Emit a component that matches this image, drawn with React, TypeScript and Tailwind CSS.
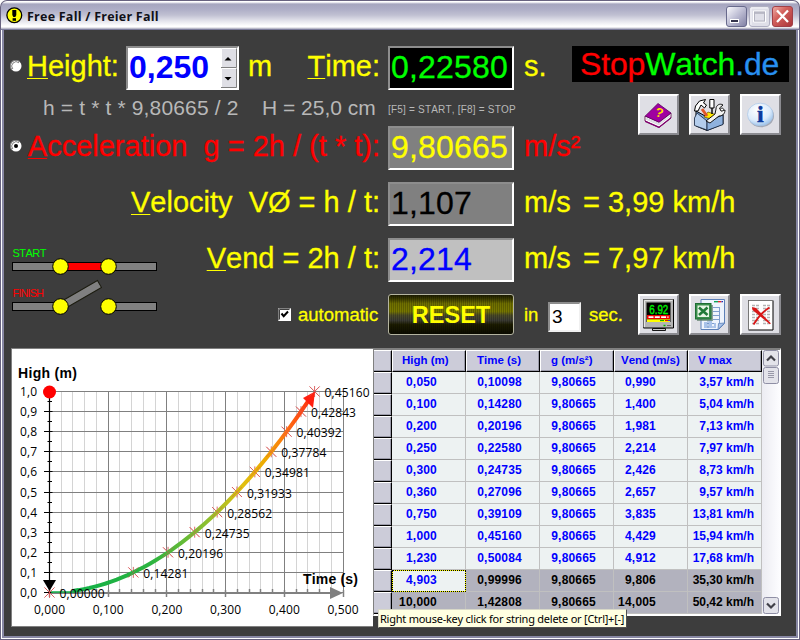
import React from 'react';
import { clsx } from 'clsx';

interface Measurement {
  high: string;
  time: string;
  g: string;
  vend: string;
  vmax: string;
  state?: 'selected' | 'inactive';
}

const measurements: Measurement[] = [
  { high: '0,050', time: '0,10098', g: '9,80665', vend: '0,990', vmax: '3,57 km/h' },
  { high: '0,100', time: '0,14280', g: '9,80665', vend: '1,400', vmax: '5,04 km/h' },
  { high: '0,200', time: '0,20196', g: '9,80665', vend: '1,981', vmax: '7,13 km/h' },
  { high: '0,250', time: '0,22580', g: '9,80665', vend: '2,214', vmax: '7,97 km/h' },
  { high: '0,300', time: '0,24735', g: '9,80665', vend: '2,426', vmax: '8,73 km/h' },
  { high: '0,360', time: '0,27096', g: '9,80665', vend: '2,657', vmax: '9,57 km/h' },
  { high: '0,750', time: '0,39109', g: '9,80665', vend: '3,835', vmax: '13,81 km/h' },
  { high: '1,000', time: '0,45160', g: '9,80665', vend: '4,429', vmax: '15,94 km/h' },
  { high: '1,230', time: '0,50084', g: '9,80665', vend: '4,912', vmax: '17,68 km/h' },
  { high: '4,903', time: '0,99996', g: '9,80665', vend: '9,806', vmax: '35,30 km/h', state: 'selected' },
  { high: '10,000', time: '1,42808', g: '9,80665', vend: '14,005', vmax: '50,42 km/h', state: 'inactive' },
];

const headers = [
  { label: 'High (m)', pad: 'pl-[9px]' },
  { label: 'Time (s)', pad: 'pl-[10px]' },
  { label: 'g (m/s²)', pad: 'pl-[10px]' },
  { label: 'Vend (m/s)', pad: 'pl-[6px]' },
  { label: 'V max', pad: 'pl-[9px]' },
];

// fall times for heights 0,0 m to 1,0 m in steps of 0,1 m
const fallTimes = [0, 0.14281, 0.20196, 0.24735, 0.28562, 0.31933, 0.34981, 0.37784, 0.40392, 0.42843, 0.4516];

const comma = (value: number, digits: number) => value.toFixed(digits).replace('.', ',');

function TitleBar() {
  return (
    <div className="flex h-[30px] items-start rounded-t-[7px] border-x border-t border-b border-x-[#67627f] border-t-[#67627f] border-b-[#7c7c9c] bg-[linear-gradient(#ffffff_0px,#ffffff_1px,#a6a6bf_3px,#adadc6_8px,#c0c0d2_14px,#e4e4ec_20px,#ffffff_25px,#ffffff_26px,#a4a4b8_28px)] pl-[5px] pr-[6px]">
      <svg width="17" height="17" viewBox="0 0 17 17" className="mt-[6px]">
        <circle cx="8.3" cy="8.3" r="7.4" fill="#ffff00" stroke="#000" strokeWidth="1.3" />
        <path d="M6.3 3h4v5l-1 2h-2l-1-2z" fill="#000" />
        <rect x="6.6" y="11.2" width="3.4" height="2.6" fill="#000" />
      </svg>
      <span className="mt-[7px] ml-[4px] flex-1 font-['Open_Sans','Noto_Sans',sans-serif] text-[12.5px] leading-[18px] font-bold tracking-[0.24px] text-[#101018]">
        Free Fall / Freier Fall
      </span>
      <div className="mt-[5px] flex gap-[2px]">
        <svg width="21" height="21" viewBox="0 0 21 21">
          <defs>
            <linearGradient id="btn" x1="0" y1="0" x2="1" y2="1">
              <stop offset="0" stopColor="#fdfdff" />
              <stop offset="0.45" stopColor="#c3c3d8" />
              <stop offset="1" stopColor="#7f7fa3" />
            </linearGradient>
          </defs>
          <rect x="0.5" y="0.5" width="20" height="20" rx="2.5" fill="url(#btn)" stroke="#686a8c" />
          <rect x="4.5" y="13.5" width="8" height="3" fill="#34344c" stroke="#fff" />
        </svg>
        <svg width="21" height="21" viewBox="0 0 21 21">
          <rect x="0.5" y="0.5" width="20" height="20" rx="2.5" fill="#dfdfe8" stroke="#b0b0c2" />
          <path d="M2 19V2h17" fill="none" stroke="#f6f6fa" />
          <path d="M4.5 5h12v11h-12z" fill="none" stroke="#fff" />
          <rect x="5.5" y="6" width="10" height="9" fill="none" stroke="#b3b3c0" />
          <path d="M5 7h11" stroke="#b3b3c0" strokeWidth="1.6" />
        </svg>
        <svg width="21" height="21" viewBox="0 0 21 21">
          <defs>
            <linearGradient id="close" x1="0" y1="0" x2="1" y2="1">
              <stop offset="0" stopColor="#f0b0a8" />
              <stop offset="0.4" stopColor="#d2605c" />
              <stop offset="1" stopColor="#a93438" />
            </linearGradient>
          </defs>
          <rect x="0.5" y="0.5" width="20" height="20" rx="2.5" fill="url(#close)" stroke="#a14048" />
          <path d="M5 4.5l11 11.5M16 4.5L5 16" stroke="#fff" strokeWidth="2.3" />
        </svg>
      </div>
    </div>
  );
}

function Radio({ checked, className }: { checked?: boolean; className?: string }) {
  return (
    <svg width="12" height="12" viewBox="0 0 12 12" className={clsx('shrink-0', className)}>
      <circle cx="6" cy="6" r="5.5" fill="#fff" />
      <path d="M1.9 9.8A5.4 5.4 0 0 1 9.8 1.9" fill="none" stroke="#808080" strokeWidth="1.1" />
      <path d="M2.8 9A4.4 4.4 0 0 1 9 2.8" fill="none" stroke="#4a4a4a" strokeWidth="0.7" />
      {checked && <circle cx="6" cy="6" r="2" fill="#000" />}
    </svg>
  );
}

function Hotkey({ children }: { children: string }) {
  return <span className="underline decoration-1 underline-offset-[2px]">{children}</span>;
}

function Readout({ className, children }: { className: string; children: string }) {
  return (
    <div
      className={clsx(
        'h-[44px] w-[126px] shrink-0 border-2 border-t-[#8d8d8d] border-r-white border-b-white border-l-[#8d8d8d] pl-px text-[32px] leading-[39px] tracking-[0.2px]',
        className,
      )}
    >
      {children}
    </div>
  );
}

function ToolButton({ children }: { children: React.ReactNode }) {
  return (
    <button className="h-[41px] w-[41px] shrink-0 border-2 border-t-white border-r-[#8b8b90] border-b-[#8b8b90] border-l-white bg-[#dfdfe5] [-webkit-text-stroke:0]">
      <svg width="37" height="37" viewBox="2 2 37 37">{children}</svg>
    </button>
  );
}

function BookIcon() {
  return (
    <>
      <path d="M7 22v5l14 6.5L33 24v-5l-12 9z" fill="#fff" stroke="#55003f" strokeWidth="0.8" />
      <path d="M8 25.2l13 5.6 11-8.6M8 24l13 5.6 11-9" fill="none" stroke="#b9b9c4" strokeWidth="0.6" />
      <path d="M20 9.5L33 19l-12 9.3L7.3 22z" fill="#a000a0" stroke="#5c005c" strokeWidth="0.8" />
      <path d="M7 26.5v1.500L21 34l12-9.5v-1.500l-12 9.5z" fill="#80006f" />
      <text x="21.5" y="23" fontSize="13" fontWeight="bold" fill="#ffe000" textAnchor="middle" transform="rotate(14 21 18)">?</text>
    </>
  );
}

function ToolboxIcon() {
  return (
    <>
      <path d="M7 17l11 6 16-5v12l-16 6.5L7 32z" fill="#7fa6d8" stroke="#000" />
      <path d="M5.5 24L8 19l10 8v9L5.5 31.5z" fill="#b4cdec" stroke="#26364f" strokeWidth="0.9" />
      <path d="M18 27l16-6v9.5l-16 6z" fill="#8fb2de" stroke="#1b2b45" strokeWidth="0.9" />
      <path d="M15 23l4-5 9 3-6 4z" fill="#ffe800" stroke="#6a5000" strokeWidth="0.7" />
      <path d="M13 15l5 7" stroke="#e0562a" strokeWidth="3" />
      <path d="M20.800 5.5h4.200V14h-4.200z" fill="#fff" stroke="#000" strokeWidth="1" />
      <path d="M23 14v6" stroke="#000" strokeWidth="1.4" />
      <path d="M5.5 17l1-5 4-5 6-1.500-2 3.500 3 2-2 3-3.500-3-3 6z" fill="#fff" stroke="#000" strokeWidth="1" />
      <path d="M17 27l9-7 1-5c0-4 4-6 7-4l-3.500 3 1.500 3 4-1c0 4-3 6-6 6l-9 7z" fill="#f2f2f2" stroke="#000" strokeWidth="0.9" />
      <circle cx="33" cy="15.500" r="1.500" fill="#fff" stroke="#000" strokeWidth="0.700" />
    </>
  );
}

function InfoIcon() {
  return (
    <>
      <defs>
        <radialGradient id="info" cx="0.4" cy="0.3" r="0.8">
          <stop offset="0" stopColor="#ffffff" />
          <stop offset="0.6" stopColor="#dcebfb" />
          <stop offset="1" stopColor="#84b4e4" />
        </radialGradient>
      </defs>
      <ellipse cx="21.2" cy="22" rx="12.8" ry="11.2" fill="#a3a8b4" />
      <ellipse cx="20.3" cy="20.5" rx="12.8" ry="11.3" fill="url(#info)" stroke="#a9c6e6" strokeWidth="0.7" />
      <text x="20.3" y="28" fontSize="24" fontWeight="bold" fill="#0a3a9c" stroke="#0a3a9c" strokeWidth="0.5" textAnchor="middle" className="font-['Liberation_Serif',serif]">i</text>
    </>
  );
}

function MonitorIcon() {
  return (
    <>
      <path d="M5.5 5.5h30v28.5h-30z" fill="#b4b4b4" stroke="#000" />
      <path d="M5.5 33.5V5.5h29.5" fill="none" stroke="#6f6f6f" />
      <path d="M6.5 33V6.5h28" fill="none" stroke="#e4e4e4" />
      <rect x="8.5" y="8.5" width="24" height="19.5" fill="#000" />
      <text x="20.8" y="19.5" fontSize="13" fill="#00f000" stroke="#00f000" strokeWidth="0.4" textAnchor="middle" textLength="19" lengthAdjust="spacingAndGlyphs">6.92</text>
      <rect x="9" y="21" width="23" height="4.2" fill="#f00000" />
      <path d="M10.5 23.2h20" stroke="#fff" strokeWidth="1.8" strokeDasharray="5 1.3" />
      <rect x="9" y="25.3" width="23" height="2.7" fill="#ffff00" />
      <path d="M22 26.6h4" stroke="#00a000" />
      <path d="M27 26.6h3" stroke="#e00000" />
      <path d="M30 26.6h2" stroke="#2020e0" />
      <path d="M25.5 31.5h2" stroke="#00c000" strokeWidth="1.5" />
      <path d="M29 31.5h4" stroke="#666" />
      <path d="M14.5 34.5h13v2h-13z" fill="#c8c8c8" stroke="#000" strokeWidth="0.9" />
    </>
  );
}

function ExcelIcon() {
  return (
    <>
      <path d="M12 5.5h23.5v24l-6 6H12z" fill="#eef4fd" stroke="#5c80b8" />
      <path d="M35.5 29l-6.5 6.5 .5-6z" fill="#a9c3ea" stroke="#5c80b8" strokeWidth="0.8" />
      <path d="M25 7.7h4" stroke="#00a050" strokeWidth="1.3" />
      <path d="M29 7.7h3.5" stroke="#e02020" strokeWidth="1.3" />
      <path d="M32.5 7.7h1.5" stroke="#2030c0" strokeWidth="1.3" />
      <path d="M24 13.500h6M24 17.5h6M24 21.5h6M16 29.5h9M30.500 13v16M24 25.5h6M19 26v8M16 33h11" fill="none" stroke="#7094c8" strokeWidth="0.9" />
      <path d="M15 28h3v6h-3zM20 26h3v8h-3zM25 29h2v5h-2z" fill="#a9c3ea" />
      <rect x="8" y="11" width="16" height="16" fill="#5f7f6c" opacity="0.7" />
      <rect x="6.5" y="9.5" width="15.5" height="15.5" fill="#3a8f4c" stroke="#1f6e34" />
      <rect x="8.5" y="11.5" width="11.5" height="11.5" fill="#e9f6e6" />
      <path d="M10 13.5l8.500 7.500M18.5 13.5l-8.500 7.500" stroke="#217a38" strokeWidth="2.6" />
    </>
  );
}

function DeleteIcon() {
  return (
    <>
      <path d="M8.5 6.5h24.5v29.5H8.5z" fill="#fff" stroke="#000" />
      <path d="M8.5 36V6.5H33" fill="none" stroke="#777" />
      <path
        d="M12 11.5h8M23 11.5h7M12 14.5h8M23 14.5h7M12 17.5h8M23 17.5h7M12 20.5h8M23 20.5h7M12 23.5h8M23 23.5h7M12 26.5h8M23 26.5h7M12 29.5h8M23 29.5h7"
        stroke="#b4b4b4"
        strokeWidth="1.7"
        strokeDasharray="3 1"
      />
      <path d="M12 13l4 1 15 15.5-1.5.5L12.5 16z" fill="#d81818" />
      <path d="M29.5 13.5c-7 4-11 9-16 17" fill="none" stroke="#d81818" strokeWidth="1.8" />
    </>
  );
}

function Switches() {
  return (
    <svg width="150" height="72" viewBox="0 0 150 72" className="text-[11px]">
      <text x="0.5" y="11" fill="#00ff00" textLength="34">START</text>
      <rect x="0.5" y="16.5" width="144" height="8" fill="#808080" stroke="#000" />
      <rect x="49" y="16.5" width="47" height="8" fill="#ff0000" stroke="#000" />
      <circle cx="48.5" cy="20.5" r="7.8" fill="#ffff00" stroke="#000" />
      <circle cx="96.5" cy="20.5" r="7.8" fill="#ffff00" stroke="#000" />
      <text x="0.5" y="51" fill="#ff0000" textLength="31.5">FINISH</text>
      <rect x="0.5" y="56.5" width="48" height="8" fill="#808080" stroke="#000" />
      <rect x="96.5" y="56.5" width="48" height="8" fill="#808080" stroke="#000" />
      <rect x="48.5" y="56.5" width="45" height="8" fill="#808080" stroke="#1c1c10" transform="rotate(-30 48.5 60.5)" />
      <circle cx="48.5" cy="60.5" r="7.8" fill="#ffff00" stroke="#000" />
      <circle cx="96.5" cy="60.5" r="7.8" fill="#ffff00" stroke="#000" />
    </svg>
  );
}

const px = (t: number) => 38.5 + t * 587;
const py = (h: number) => 244.5 - h * 201;

function Chart() {
  const curve = Array.from({ length: 44 }, (_, i) => {
    const t = 0.04 + (i * 0.4) / 43;
    return `${i ? 'L' : 'M'}${px(t).toFixed(1)} ${py(4.903 * t * t).toFixed(1)}`;
  }).join('');

  return (
    <div className="h-[279px] w-[362px] shrink-0 border-t border-b border-l border-[#808080] bg-white">
      <svg width="361" height="277" viewBox="1 1 361 277" className="font-['Open_Sans','Noto_Sans',sans-serif] text-[12px]">
        <defs>
          <linearGradient id="heat" gradientUnits="userSpaceOnUse" x1="60" y1="0" x2="305" y2="0">
            <stop offset="0" stopColor="#10b048" />
            <stop offset="0.33" stopColor="#2cb440" />
            <stop offset="0.55" stopColor="#8cc030" />
            <stop offset="0.7" stopColor="#e0c010" />
            <stop offset="0.8" stopColor="#f0a800" />
            <stop offset="0.88" stopColor="#ff7010" />
            <stop offset="1" stopColor="#ff2010" />
          </linearGradient>
        </defs>

        {/* grid */}
        {Array.from({ length: 26 }, (_, i) => (
          <path
            key={i}
            d={`M${Math.floor(px(i * 0.02)) + 0.5} 43V244`}
            stroke={i % 5 ? '#d4d4d4' : '#808080'}
          />
        ))}
        {Array.from({ length: 11 }, (_, i) => (
          <path key={i} d={`M38 ${Math.floor(py(i / 10)) + 0.5}H332`} stroke="#808080" />
        ))}

        {/* axes */}
        {Array.from({ length: 26 }, (_, i) => (
          <path key={i} d={`M${Math.floor(px(i * 0.02)) + 0.5} ${i % 5 ? 241 : 242}V${i % 5 ? 245 : 249}`} stroke="#808080" strokeWidth="1.5" />
        ))}
        <path d="M38 245H325" stroke="#808080" strokeWidth="2" />
        <path d="M319 239l13 6-13 6z" fill="#808080" />
        <path d="M38.5 44V246" stroke="#000" strokeWidth="1.2" />
        {Array.from({ length: 21 }, (_, i) => (
          <path key={i} d={`M${i % 2 ? 36.5 : 33} ${Math.floor(py(i / 20)) + 0.5}H${i % 2 ? 41 : 41.5}`} stroke="#000" />
        ))}

        {/* axis labels */}
        {Array.from({ length: 11 }, (_, i) => (
          <text key={i} x="9" y={py(i / 10) + 4.5} textLength="17">{comma(i / 10, 1)}</text>
        ))}
        {Array.from({ length: 6 }, (_, i) => (
          <text key={i} x={px(i / 10) - 15.5} y="266" textLength="31">{comma(i / 10, 3)}</text>
        ))}
        <text x="7" y="30" textLength="59" className="font-['Liberation_Sans',Arial,sans-serif] text-[14px] font-bold">High (m)</text>

        {/* fall curve */}
        {fallTimes.map((t, i) => (
          <path
            key={t}
            d="M-5-5L5 5M5-5L-5 5M0-5.5V5.5"
            transform={`translate(${px(t)} ${py(i / 10)})`}
            stroke="#d85858"
            strokeWidth="0.9"
          />
        ))}
        <path d="M40 244H64" stroke="#10b048" strokeWidth="1.5" />
        <path d={curve} fill="none" stroke="url(#heat)" strokeWidth="4" />
        <path d="M304 43.5l-12 6.5 10 10z" fill="#ff2010" />
        {fallTimes.map((t, i) => (
          <path
            key={t}
            d="M-5-5L5 5M5-5L-5 5"
            transform={`translate(${px(t)} ${py(i / 10)})`}
            stroke="#d85858"
            strokeWidth="0.7"
            opacity="0.7"
          />
        ))}
        {fallTimes.map((t, i) => (
          <text key={t} x={px(t) + 10} y={py(i / 10) + 5.5} textLength="45">{comma(t, 5)}</text>
        ))}
        <text x="292" y="236" textLength="55" className="font-['Liberation_Sans',Arial,sans-serif] text-[14px] font-bold">Time (s)</text>

        <circle cx="38.5" cy="44" r="6.5" fill="#ff0000" />
        <path d="M32 232h13l-6.5 11z" fill="#000" />
      </svg>
    </div>
  );
}

function ScrollBar() {
  return (
    <div className="flex w-[18px] flex-col items-center justify-between bg-[linear-gradient(90deg,#ececf2,#fdfdff)]">
      <div>
        <svg width="16" height="17" viewBox="0 0 16 17" className="block">
          <rect x="0.5" y="0.5" width="15" height="15.5" rx="2" fill="#e3e3ea" stroke="#8f8fa5" />
          <path d="M4 10.5l4-4 4 4" fill="none" stroke="#404048" strokeWidth="2.2" />
        </svg>
        <svg width="16" height="17" viewBox="0 0 16 17" className="block">
          <rect x="0.5" y="0.5" width="15" height="16" rx="2" fill="#e3e3ea" stroke="#8f8fa5" />
          <path d="M5 4.5h6M5 6.5h6M5 8.5h6M5 10.5h6" stroke="#9090a0" strokeWidth="0.9" />
        </svg>
      </div>
      <svg width="16" height="17" viewBox="0 0 16 17" className="block">
        <rect x="0.5" y="0.5" width="15" height="16" rx="2" fill="#e3e3ea" stroke="#8f8fa5" />
        <path d="M4 6.5l4 4 4-4" fill="none" stroke="#404048" strokeWidth="2.2" />
      </svg>
    </div>
  );
}

function Gutter() {
  return <div className="border-t border-r border-b border-t-white border-r-black border-b-black bg-[#ccccd9] shadow-[inset_-1px_-1px_0_#9a9aa8]" />;
}

function MeasurementTable() {
  return (
    <div className="flex h-[268px] w-[408px] border-t-2 border-r border-b-2 border-l border-t-[#808080] border-r-white border-b-white border-l-[#808080] text-[12px] font-bold">
      <div className="w-[388px]">
        <div className="grid h-[22px] grid-cols-[18px_repeat(5,74px)]">
          <Gutter />
          {headers.map((header) => (
            <div
              key={header.label}
              className={clsx(
                'border-t border-r border-b border-l border-t-white border-r-black border-b-black border-l-white bg-[#ccccd9] text-[11.5px] leading-[19px] whitespace-nowrap text-[#0000ff] shadow-[inset_-1px_-1px_0_#9a9aa8]',
                header.pad,
              )}
            >
              {header.label}
            </div>
          ))}
        </div>
        {measurements.map((row) => {
          const cell = clsx(
            'border-r border-b border-[#c0c0c0] text-right leading-[20px] whitespace-nowrap',
            row.state ? 'bg-[#b2b2be] text-black' : 'bg-[#edf2f2] text-[#0000ff]',
          );
          return (
            <div key={row.high} className="grid h-[22px] grid-cols-[18px_repeat(5,74px)]">
              <Gutter />
              {row.state === 'selected' ? (
                <div className="border border-[#ffff00] bg-[#edf2f2] pr-[28px] text-right leading-[18px] tracking-[0.2px] text-[#0000ff] outline-1 -outline-offset-1 outline-black outline-dotted">
                  {row.high}
                </div>
              ) : (
                <div className={clsx(cell, 'pr-[28px] tracking-[0.2px]')}>{row.high}</div>
              )}
              <div className={clsx(cell, 'pr-[17px] tracking-[0.2px]')}>{row.time}</div>
              <div className={clsx(cell, 'pr-[17px] tracking-[0.2px]')}>{row.g}</div>
              <div className={clsx(cell, 'pr-[31px] tracking-[0.2px]')}>{row.vend}</div>
              <div className={clsx(cell, 'pr-[7px]')}>{row.vmax}</div>
            </div>
          );
        })}
      </div>
      <ScrollBar />
    </div>
  );
}

export default function App() {
  return (
    <div className="relative h-[640px] w-[800px] overflow-hidden bg-white font-['Liberation_Sans',Arial,sans-serif] [font-kerning:none]">
      <TitleBar />
      <div className="flex h-[610px] border-x border-b border-[#67627f] bg-white px-px pb-px">
        <main className="w-full border-x-2 border-b-2 border-[#8888a4] bg-[#3d3d3d] pt-[16px] text-[29px] whitespace-nowrap text-[#ffff00]">
          <div className="flex [-webkit-text-stroke:0.3px]">
            <div className="w-[568px]">
              {/* Height / Time */}
              <div className="flex h-[44px] items-center">
                <Radio className="mb-[4px] ml-[6px]" />
                <span className="w-[104px] shrink-0 pb-[2px] pl-[5px]"><Hotkey>H</Hotkey>eight:</span>
                <div className="flex h-[44px] w-[113px] border-2 border-t-[#8d8d8d] border-r-white border-b-white border-l-[#8d8d8d] bg-white">
                  <span className="flex-1 pl-px text-[32px] leading-[39px] font-bold text-[#0000ff] [-webkit-text-stroke:0]">0,250</span>
                  <div className="flex w-[16px] flex-col">
                    {['M3.5 12.5h7l-3.5-3.5z', 'M3.5 9h7l-3.5 3.5z'].map((arrow) => (
                      <svg key={arrow} width="16" height="20" viewBox="0 0 16 20" className="bg-[#dfdfe5]">
                        <path d="M0.5 19.5V0.5H15.5" fill="none" stroke="#fff" />
                        <path d="M15.5 0.5V19.5H0" fill="none" stroke="#808080" />
                        <path d={arrow} fill="#000" />
                      </svg>
                    ))}
                  </div>
                </div>
                <span className="w-[60px] pb-[2px] pl-[9px]">m</span>
                <span className="w-[89px] pr-[8px] pb-[2px] text-right"><Hotkey>T</Hotkey>ime:</span>
                <Readout className="bg-black text-[#00ff00]">0,22580</Readout>
                <span className="pb-[2px] pl-[10px]">s.</span>
              </div>

              <div className="flex h-[36px] items-center text-[21px] text-[#b8b8b8] [-webkit-text-stroke:0]">
                <span className="w-[219px] pl-[39px] tracking-[0.15px]">h = t * t * 9,80665 / 2</span>
                <span className="w-[165px] pl-[39px]">H = 25,0 cm</span>
                <span className="pt-[3px] text-[10px] tracking-[0.2px]">[F5] = START, [F8] = STOP</span>
              </div>

              {/* Acceleration */}
              <div className="flex h-[44px] items-center text-[#ff0000]">
                <Radio checked className="mb-[4px] ml-[6px]" />
                <span className="w-[366px] shrink-0 pr-[8px] pb-[2px] text-right whitespace-pre">
                  <Hotkey>A</Hotkey>{'cceleration  g = 2h / (t * t):'}
                </span>
                <Readout className="bg-[#808080] text-[#ffff00]">9,80665</Readout>
                <span className="pb-[2px] pl-[10px]">m/s²</span>
              </div>
            </div>

            <div>
              <div className="h-[36px] w-[217px] bg-black pl-[8px] text-[32px] leading-[36px] tracking-[-0.15px]">
                <span className="text-[#ff0000]">Stop</span>
                <span className="text-[#00ff00]">Watch</span>
                <span className="text-[#2890f0]">.de</span>
              </div>
              <div className="mt-[12px] ml-[66px] flex gap-[10px]">
                <ToolButton><BookIcon /></ToolButton>
                <ToolButton><ToolboxIcon /></ToolButton>
                <ToolButton><InfoIcon /></ToolButton>
              </div>
            </div>
          </div>

          {/* Velocity */}
          <div className="mt-[12px] flex h-[44px] items-center [-webkit-text-stroke:0.3px]">
            <span className="w-[384px] pr-[8px] pb-[2px] text-right whitespace-pre">
              <Hotkey>V</Hotkey>{'elocity  VØ = h / t:'}
            </span>
            <Readout className="bg-[#808080] text-black">1,107</Readout>
            <span className="w-[69px] pb-[2px] pl-[10px]">m/s</span>
            <span className="pb-[2px]">= 3,99 km/h</span>
          </div>

          <div className="mt-[12px] flex">
            <div className="w-[161px] pt-[8px] pl-[8px]">
              <Switches />
            </div>
            <div className="[-webkit-text-stroke:0.3px]">
              <div className="flex h-[44px] items-center">
                <span className="w-[223px] pr-[8px] pb-[2px] text-right"><Hotkey>V</Hotkey>end = 2h / t:</span>
                <Readout className="bg-[#c0c0c0] text-[#0000ff]">2,214</Readout>
                <span className="w-[69px] pb-[2px] pl-[10px]">m/s</span>
                <span className="pb-[2px]">= 7,97 km/h</span>
              </div>
              <div className="mt-[12px] flex h-[41px] items-center text-[18.5px]">
                <svg width="13" height="13" viewBox="0 0 13 13" className="ml-[113px]">
                  <rect width="13" height="13" fill="#fff" />
                  <path d="M0.5 12.5V0.5H12.5" fill="none" stroke="#808080" />
                  <path d="M1.5 11.5V1.5H11.5" fill="none" stroke="#404040" />
                  <path d="M3.5 5.5l2.2 2.7 4.3-4.7" fill="none" stroke="#000" strokeWidth="2" />
                </svg>
                <span className="w-[97px] pl-[7px]">automatic</span>
                <button className="h-[41px] w-[126px] rounded-[3px] border border-[#b4b4a0] bg-[repeating-linear-gradient(90deg,rgba(0,0,0,0.2)_0px,rgba(0,0,0,0.2)_1px,transparent_1px,transparent_2px),linear-gradient(#1c1c00_0%,#3c3c00_10%,#707000_22%,#787800_42%,#4c4c28_52%,#3c3c34_65%,#1c1c00_76%,#0c0c00_100%)] text-[23.5px] leading-[40px] font-bold [-webkit-text-stroke:0]">
                  RESET
                </button>
                <span className="w-[34px] pl-[10px]">in</span>
                <div className="mt-[5px] h-[30px] w-[33px] border-2 border-t-[#8d8d8d] border-r-[#f0f0f0] border-b-[#f0f0f0] border-l-[#8d8d8d] bg-white pl-[2px] text-[19px] leading-[26px] text-black [-webkit-text-stroke:0]">
                  3
                </div>
                <span className="w-[57px] pl-[8px]">sec.</span>
                <div className="flex gap-[10px]">
                  <ToolButton><MonitorIcon /></ToolButton>
                  <ToolButton><ExcelIcon /></ToolButton>
                  <ToolButton><DeleteIcon /></ToolButton>
                </div>
              </div>
            </div>
          </div>

          <div className="mt-[13px] ml-[7px] flex text-black">
            <Chart />
            <MeasurementTable />
          </div>
        </main>
      </div>

      {/* grid tooltip */}
      <div className="absolute top-[609px] left-[378px] h-[19px] w-[249px] border border-t-[#d8d8c8] border-r-[#505050] border-b-[#505050] border-l-[#d8d8c8] bg-[#ffffe1] pl-px font-['Noto_Sans',sans-serif] text-[11px] leading-[17px] tracking-[-0.24px] whitespace-nowrap text-black">
        Right mouse-key click for string delete or [Ctrl]+[-]
      </div>
    </div>
  );
}
